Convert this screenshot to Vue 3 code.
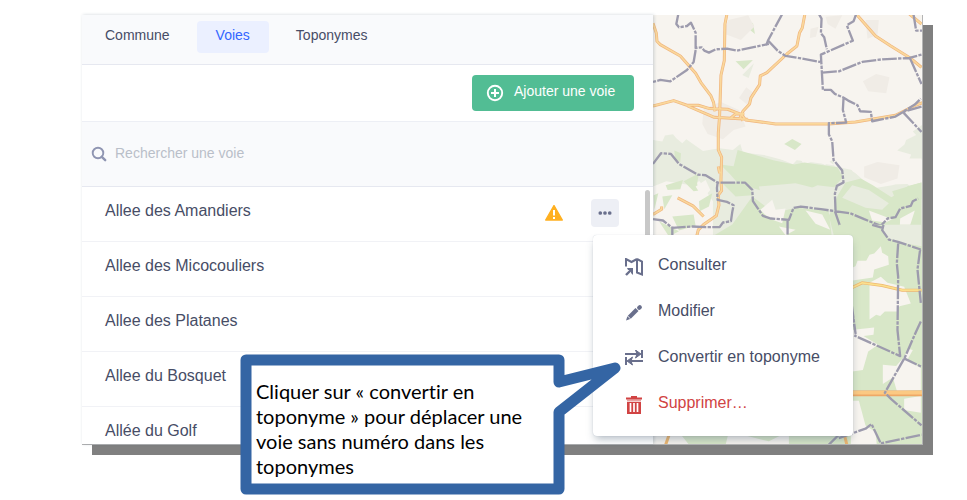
<script setup>
import { ref } from 'vue'

const tabs = ['Commune', 'Voies', 'Toponymes']
const active = ref('Voies')
const query = ref('')
const streets = [
  { name: 'Allee des Amandiers', warning: true },
  { name: 'Allee des Micocouliers' },
  { name: 'Allee des Platanes' },
  { name: 'Allee du Bosquet' },
  { name: 'Allée du Golf' }
]
const actions = [
  { id: 'view', label: 'Consulter' },
  { id: 'edit', label: 'Modifier' },
  { id: 'convert', label: 'Convertir en toponyme' },
  { id: 'delete', label: 'Supprimer…', danger: true }
]
</script>

<template>
  <main class="page">
    <div class="frame">
      <section class="panel">
        <nav class="tabs">
          <button
            v-for="tab in tabs"
            :key="tab"
            type="button"
            class="tab"
            :class="{ active: tab === active }"
            @click="active = tab"
          >{{ tab }}</button>
        </nav>

        <div class="toolbar">
          <button type="button" class="add">
            <svg class="add-icon" viewBox="0 0 18 18" aria-hidden="true">
              <circle cx="9" cy="9" r="7.2" fill="none" stroke="#fff" stroke-width="1.9" />
              <path d="M9 5v8M5 9h8" stroke="#fff" stroke-width="2" />
            </svg>
            <span>Ajouter une voie</span>
          </button>
        </div>

        <label class="search">
          <svg class="search-icon" viewBox="0 0 16 16" aria-hidden="true">
            <circle cx="7" cy="7" r="5.3" fill="none" stroke="#8f95b2" stroke-width="1.9" />
            <path d="M10.8 10.8l3.4 3.4" stroke="#8f95b2" stroke-width="2.4" stroke-linecap="round" />
          </svg>
          <input v-model="query" type="text" placeholder="Rechercher une voie" />
        </label>

        <div class="list-area">
          <ul class="list">
            <li v-for="street in streets" :key="street.name" class="row">
              <span class="name">{{ street.name }}</span>
              <template v-if="street.warning">
                <svg class="warning" viewBox="0 0 18 16" aria-hidden="true">
                  <path d="M9 .5L17.3 15H.7z" fill="#ffb020" stroke="#ffb020" stroke-width="1.4" stroke-linejoin="round" />
                  <path d="M9 5v5.4M9 12v2" stroke="#fff" stroke-width="2" />
                </svg>
                <button type="button" class="more" aria-label="Actions">
                  <svg viewBox="0 0 16 16" aria-hidden="true" fill="#696f8c">
                    <circle cx="2.600" cy="8" r="2.100" />
                    <circle cx="8" cy="8" r="2.100" />
                    <circle cx="13.400" cy="8" r="2.100" />
                  </svg>
                </button>
              </template>
            </li>
          </ul>
          <div class="scrollbar"></div>
        </div>
      </section>

      <div class="map">
        <svg viewBox="0 0 269 430" preserveAspectRatio="xMinYMin slice" aria-hidden="true">
          <rect width="269" height="430" fill="#f7f4ef" />
          <g transform="translate(-14 -15) scale(.33333)">
            <g fill="#e8ecdf">
              <path d="M42 420l28 5 8-18 24-4 10 12 18 15 12-12 50 35 50-8 40 5 22-18 8 26 90 10 60 25 20-22 12 22 40-12 24 14 34-24 6 24 24-4 20 24 64 40 100-3 30 26 48-32v200H42z" />
              <path d="M850 375l-28 20 10 10-30 15-5 14-22 18 42 12-8 20 41-5zM310 225l35-35-16 44z" />
            </g>
            <g fill="#f7f4ef">
              <path d="M42 560l40-16 60 10 40-10 40 60 0 116H42zM374 440l16-20 8 30 50 18-10 14-60-16zM470 480l16-40 14 34 34-26 10 34 40 0v14zM590 500l50 10 60 56 60-10 88-30v-50l-40 0-60-30-120 0-80 20z" />
            </g>
            <g fill="#d8e7c8">
              <path d="M296 450l110 32 60 12 30-6 100 14 16 30-26 30-50-6-40 18-80-16-40 16-76-20-26-30-30-30 40 5zM620 548l46-12 36 20 56 36 50-34 40-10v180H590l-20-80 26-60zM340 590l40 30 44 20 10-38 24-14 40 30 70 6 10 80-10 60H206l-26-30 50-30 50-30z" />
              <path d="M436 432l24-15 28 15-20 18zM290 184l52-4-28 28zM326 84l16-16 6 34zM106 452l20 8-2 26-16-8zM134 544l46-24-6 34 34 14-44 6zM80 556l52-16-8 28-38 2zM180 604l40-24-10 40-28 14zM44 586l14-6-12 50zM70 590l30-4-24 42zM100 650l64-6 6 34-50 14zM60 664l60 30-30 16z" />
              <path d="M250 550l74-4 16 40-50 4zM760 574l88-26v50l-70 20z" />
            </g>
            <g fill="#e8ecdf">
              <path d="M360 560l110-10 80 20 40 20-6 44-110-10-66 14-40-44zM640 556l50 14 60 40-20 20-50-6-70-30z" />
            </g>
            <g fill="#f7f4ef">
              <path d="M364 630l36-30 10 30 30-4-10 44-40-14zM500 632l50 12 24 46-44-18zM690 632l70 26-20 10-40-6zM784 656l44-24-16 50-30 20zM420 680l50 10-30 16zM170 560l30-20 14 30-22 26z" />
            </g>
            <g fill="#f0ece6">
              <path d="M194 326l52-20 54 24 20 50-36 10-32 28-46-16-16-30zM300 294l22-32 26 20-18 36zM672 244l40-22 40 10-10 48-54-6zM676 500l40-14 66 10-6 40-50 16-50-20zM268 60l60-14 18 34-40 40-54-20zM680 60l40 0-4 44-30 12zM515 86l24-6-8 30-18 4zM560 50l50-4-20 40-24-14z" />
            </g>
            <g fill="none" stroke="#f0b57e" stroke-width="9" stroke-linejoin="round">
              <path id="road-main" d="M42 70l10 30 2 24 10 10 60 34 30 34 16 18 16 28 30 40 8 20 4 26 M264 42l-6 30-2 110-10 44-2 60-2 60-4 54v50l10 22-2 70 2 30-10 14 2 30-8 32-38 26-16 16-8 32M498 42l-8 42-8 14-8 40-30 24-60 56-20 10-2 26-26 40-4 18-20 22-8 18 8 10M42 318l62-16 40 14 34 0 34 10 54 2 42 16 12 16 90 12h160l80-6 120-20 60-30 48-18M652 42l58 66 46 30 58 36 34 28M812 42l36 30M146 318l80 34 100 6M276 354l14-12h26M116 594l46 24 32 32M42 644l26-16 0-8M238 500l4 20" />
            </g>
            <g fill="none" stroke="#fad89c" stroke-width="5" stroke-linejoin="round"><use href="#road-main" /></g>
            <g fill="none" stroke="#9d9bad" stroke-width="7" stroke-linejoin="round" stroke-dasharray="44 4 10 4">
              <path d="M118 42l-6 30 8 10 24-4 12-10 14 30v46l18-2 8 10 14 6 20-10 34-2 30 6 96-20M430 42l-42 78-8 20M170 150l-6 36-20 24-50 34-30-4-22 6M386 120l30 32 24 16 50 8 54 10M540 42l8 14-2 44 10 12 8 36M652 42l-8 22-20 12 18 46-96 42 6 106 24 0 12 12 24 10 16 10 28 14 8 18 32 2 4 28 70-14 58-36 18-18M550 218l50-4 70-28 60-8 82-4 36-10M814 176l34 76M848 320l-56 16 56 60M614 294l-2 36 10 38-52 2 0 34 10 20 4 56 26 32 4 36-20 10-6 24 2 50M42 492l24-32 30 2 24 30 56 32 24 2 36 22 82 0 22 22 2 34 30 44 24 8 54 4 14-36 22-4 60 8 30 4 58 8 42 18 50 20 20-22 24-4 14-26 32-8 6-14 16-8M42 658l30 4 28 22 60-4 40 2 42 0 10-14 24-4 4-28 4-20-20-10-28-6-2-36 2-16M100 680v40M446 660v60M588 634l30 86M734 684l0 16 16 20M824 42l8 50h18" />
            </g>
          </g>
          <g transform="translate(186 210) scale(.33333)">
            <path d="M0 0h250v660H-560v-60H0z" fill="#d8e7c8" />
            <path d="M134 0h114v64l-60-10-40-14-14-24z" fill="#e8ecdf" />
            <g fill="#f7f4ef">
              <path d="M36 130l14-6 6-16 26 0 10-18 14-4 20-22 4 20 18 10 2 26-44 14-4 24-66 10zM92 174l34-18 20 18 50 12 20 50-34 8-6 16-38 0-14 14-12-4-20 14z" />
              <path d="M36 316l70-8-2 22-30 4 44 26-30 20-16 56-32 4zM132 420l40 4 22-26 14-26 14 4-16 28 40 26v66l-72 2-12-40-30 20zM36 528l24 0 20 74 30 20 4 40H36zM196 556l0-34 50-8v50z" />
              <path d="M-560 610h70l40 50h-110zM-330 620l120 30 60-30v40h-190z" />
            </g>
            <path d="M36 190l34-16 60 8 60 14h58M-520 660l12-34M24 660l-10-40" fill="none" stroke="#efb76f" stroke-width="9" />
            <path d="M36 190l34-16 60 8 60 14h58" fill="none" stroke="#fbe08e" stroke-width="5" />
            <path d="M0 506h250" stroke="#efa866" stroke-width="17" />
            <path d="M0 504h250" stroke="#fbc983" stroke-width="10" />
            <g fill="none" stroke="#9d9bad" stroke-width="7" stroke-linejoin="round" stroke-dasharray="44 4 10 4">
              <path d="M134 0l-4 16 20 28 30 8 66 22M178 56l-4 60 4 40-2 160 8 78-138-62M38 236l12 90-10-64M244 74l-8 60 10 100M246 290l-14 30-34 78-60 106 20 20 90 78M194 400l54 26M0 640l80-28 18-14 28 58 122-26M100 0l34 10M-30 660l30-30" />
            </g>
          </g>
        </svg>
      </div>

      <div class="menu" role="menu">
        <button
          v-for="action in actions"
          :key="action.id"
          type="button"
          role="menuitem"
          class="action"
          :class="{ danger: action.danger }"
        >
          <svg viewBox="0 0 18 18" aria-hidden="true" fill="none" stroke="currentColor" stroke-width="2">
            <template v-if="action.id === 'view'">
              <path d="M1 8.500V1L6.500 4 12 1M12 1v13.500l5 2V3.500L12 1" />
              <path d="M1 17l6-6" stroke-width="2.400" />
              <path d="M2 10h6v7L6 15V12H3z" fill="currentColor" stroke="none" />
            </template>
            <template v-else-if="action.id === 'edit'">
              <path d="M1 16.500l1.400-4.300 2.800 2.800z" fill="currentColor" stroke="none" />
              <path d="M4.300 13.200l7.700-7.700" stroke-width="4.200" />
              <path d="M14.200 3.800l.6-.6" stroke-width="4.200" stroke-linecap="round" />
            </template>
            <template v-else-if="action.id === 'convert'">
              <path d="M0 4h14M4 11h14M17 0v8M1 7v8" />
              <path d="M10.500 0L16 4l-5.500 4 1.500-4zM7.500 7L2 11l5.500 4L6 11z" fill="currentColor" stroke-width="1" />
            </template>
            <template v-else>
              <path d="M1 2.500h16M6 1h6" />
              <path d="M2 4.500h14" stroke-opacity=".5" />
              <path d="M2 6h14v12H2z" fill="currentColor" stroke="none" />
              <path d="M5.500 7v9M9 7v9M12.500 7v9" stroke="#fff" stroke-width="1.700" />
            </template>
          </svg>
          <span>{{ action.label }}</span>
        </button>
      </div>

      <aside class="callout">
        <svg viewBox="0 0 381 142" aria-hidden="true">
          <path
            d="M6 6h313v22l56-14-56 44v77H6z"
            fill="#fff"
            stroke="#3465a4"
            stroke-width="11"
            stroke-linejoin="round"
          />
        </svg>
        <p>Cliquer sur « convertir en<br />toponyme » pour déplacer une<br />voie sans numéro dans les<br />toponymes</p>
      </aside>
    </div>
  </main>
</template>

<style>
body {
  margin: 0;
  background: #fff;
}
</style>

<style scoped>
* {
  box-sizing: border-box;
}

.page {
  padding: 15px 44px 55px 82px;
  font-family: "Liberation Sans", Arial, sans-serif;
  color: #474d66;
}

button {
  border: 0;
  font: inherit;
  color: inherit;
  cursor: pointer;
}

.frame {
  position: relative;
  display: flex;
  border-right: 1px solid #b4b4b4;
  border-bottom: 1px solid #b4b4b4;
  box-shadow: 10px 10px 0 #808080;
}

.panel {
  position: relative;
  z-index: 1;
  flex: 0 0 68%;
  background: #fff;
  box-shadow: 1px 0 3px rgba(67, 90, 111, 0.25);
}

.tabs {
  display: flex;
  gap: 8px;
  padding: 6px 4px 11px;
  background: #f9fafc;
  border-bottom: 1px solid #e6e8f0;
}

.tab {
  padding: 0 19px 4px;
  line-height: 28px;
  font-size: 14px;
  background: transparent;
  border-radius: 4px;
}

.tab.active {
  color: #3366ff;
  background: #ebf0ff;
}

.toolbar {
  display: flex;
  justify-content: flex-end;
  padding: 10px 19px;
}

.add {
  display: flex;
  align-items: center;
  gap: 10px;
  height: 36px;
  padding: 0 19px 0 14px;
  font-size: 14px;
  color: #fff;
  background: #52bd94;
  border-radius: 4px;
}

.add span {
  padding-bottom: 4px;
}

.add-icon {
  width: 18px;
  height: 18px;
}

.search {
  display: flex;
  align-items: center;
  gap: 8px;
  height: 66px;
  padding: 0 9px;
  background: #f9fafc;
  border-top: 1px solid #edeff5;
  border-bottom: 1px solid #e6e8f0;
}

.search-icon {
  width: 16px;
  height: 16px;
}

.search input {
  flex: 1;
  padding: 0 0 2px;
  border: 0;
  outline: 0;
  font: inherit;
  font-size: 14px;
  background: transparent;
}

.search input::placeholder {
  color: #b9bfc9;
}

.list-area {
  display: flex;
  max-height: 257px;
  overflow: hidden;
}

.list {
  flex: 1;
  margin: 0;
  padding: 0;
  list-style: none;
}

.scrollbar {
  width: 5px;
  height: 100px;
  margin: 3px 3px 0 0;
  background: #c8c8c8;
  border-radius: 3px;
}

.row {
  display: flex;
  align-items: center;
  height: 55px;
  padding: 0 26px 2px 23px;
  border-bottom: 1px solid #f1f2f6;
}

.name {
  flex: 1;
  padding-bottom: 4px;
  font-size: 16px;
}

.warning {
  width: 18px;
  height: 16px;
  margin-right: 28px;
}

.more {
  display: flex;
  align-items: center;
  justify-content: center;
  width: 28px;
  height: 28px;
  padding: 0;
  background: #edeff5;
  border-radius: 4px;
}

.more svg {
  width: 14px;
  height: 14px;
}

.map {
  position: relative;
  flex: 1;
  overflow: hidden;
}

.map svg {
  position: absolute;
  width: 100%;
  height: 100%;
}

.menu {
  position: absolute;
  z-index: 2;
  top: 220px;
  left: 511px;
  display: flex;
  flex-direction: column;
  width: 260px;
  padding: 9px 0 8px;
  background: #fff;
  border-radius: 4px;
  box-shadow: 0 0 1px rgba(67, 90, 111, 0.3), 0 5px 8px -2px rgba(67, 90, 111, 0.4);
}

.action {
  display: flex;
  align-items: center;
  gap: 15px;
  height: 46px;
  padding: 0 32px;
  font-size: 16px;
  background: transparent;
}

.action span {
  padding-bottom: 4px;
}

.action svg {
  width: 18px;
  height: 18px;
  color: #696f8c;
}

.action.danger,
.action.danger svg {
  color: #d14343;
}

.callout {
  position: absolute;
  z-index: 3;
  top: 339px;
  left: 158px;
  width: 381px;
}

.callout svg {
  position: absolute;
  width: 381px;
  height: 142px;
}

.callout p {
  position: relative;
  margin: 0;
  padding: 25px 0 0 16px;
  font-family: Lato, sans-serif;
  font-size: 20px;
  font-variant-ligatures: none;
  line-height: 25px;
  color: #000;
}
</style>
